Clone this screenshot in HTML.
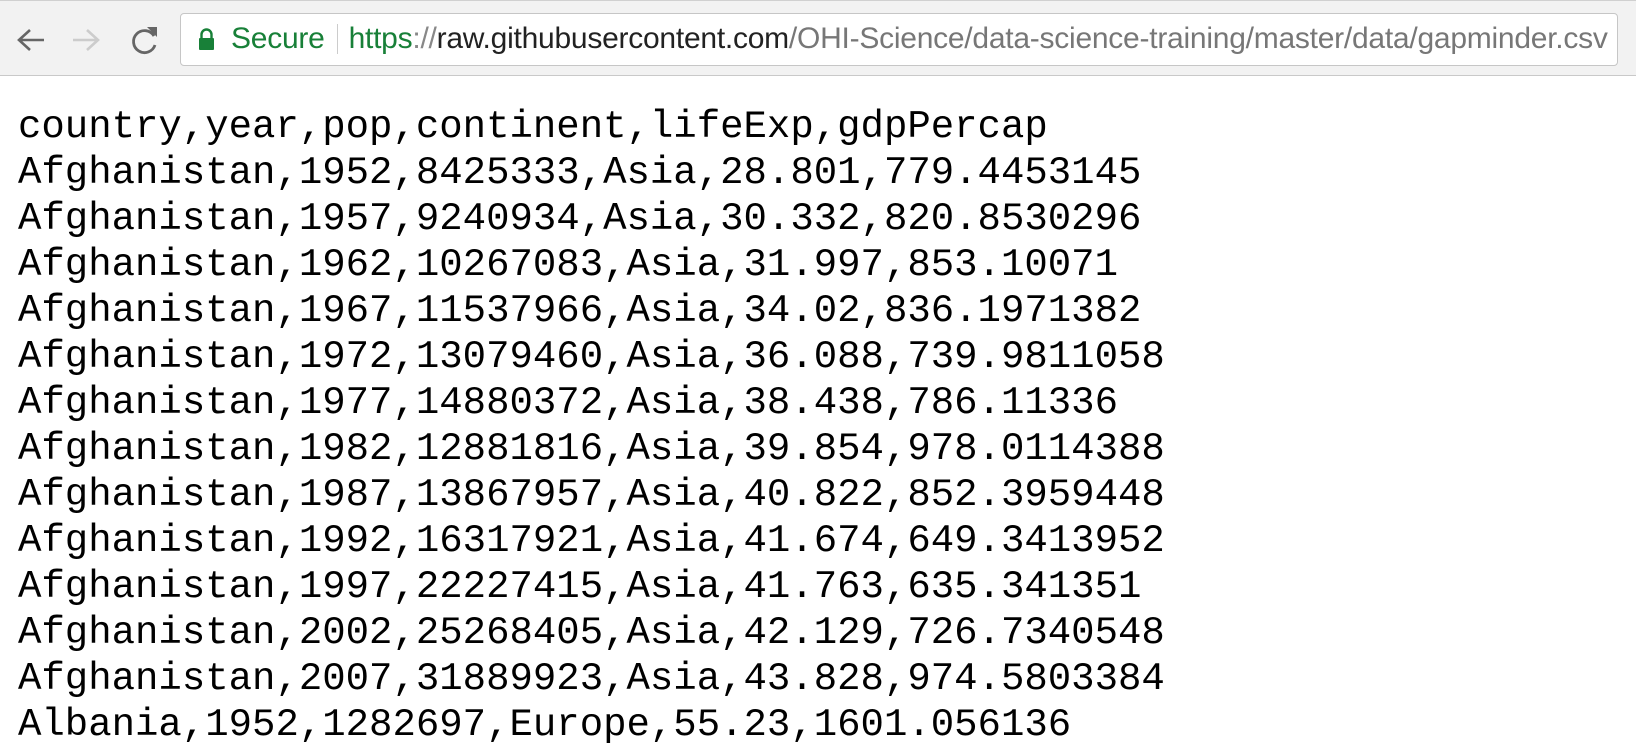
<!DOCTYPE html>
<html><head><style>
body{margin:0;width:1636px;height:746px;overflow:hidden;background:#fff;font-family:"Liberation Sans",sans-serif}
.bar{position:absolute;left:0;top:0;width:1636px;height:76px;background:#f2f2f2;border-bottom:1px solid #c9c9c9;border-top:1px solid #d0d0d0;box-sizing:border-box}
.box{position:absolute;left:180px;top:12px;width:1438px;height:53px;background:#fff;border:1px solid #c6c6c6;border-radius:4px;box-sizing:border-box}
.url{position:absolute;left:231px;top:21px;font-size:30px;color:#222;white-space:nowrap;letter-spacing:-0.25px}
pre{position:absolute;left:18px;top:104px;margin:0;font-family:"Liberation Mono",monospace;font-size:39px;line-height:46px;color:#000}
</style></head><body>
<div class="bar">
<svg style="position:absolute;left:0;top:22px" width="170" height="34">
<path d="M44 17H20M30 7L19 17l11 10" stroke="#666" stroke-width="2.6" fill="none"/>
<path d="M73 17h24M87 7l11 10-11 10" stroke="#ccc" stroke-width="2.6" fill="none"/>
<path d="M154 13a11 11 0 1 0 1 9" stroke="#666" stroke-width="2.8" fill="none"/>
<path d="M147 4l10 0 0 10z" fill="#666"/>
</svg>
<div class="box"></div>
<svg style="position:absolute;left:198px;top:27px" width="17" height="23"><path d="M3.5 10V6.5a5 5 0 0 1 10 0V10" stroke="#188038" stroke-width="2.4" fill="none"/><rect x="1" y="10" width="15" height="12" rx="1" fill="#188038"/></svg>
<div class="url"><span style="color:#188038">Secure</span><span style="display:inline-block;width:1px;height:30px;background:#ccc;margin:0 11px 0 12px;vertical-align:-6px"></span><span style="color:#188038">https</span><span style="color:#888">://</span>raw.githubusercontent.com<span style="color:#777">/OHI-Science/data-science-training/master/data/gapminder.csv</span></div>
</div>
<pre>country,year,pop,continent,lifeExp,gdpPercap
Afghanistan,1952,8425333,Asia,28.801,779.4453145
Afghanistan,1957,9240934,Asia,30.332,820.8530296
Afghanistan,1962,10267083,Asia,31.997,853.10071
Afghanistan,1967,11537966,Asia,34.02,836.1971382
Afghanistan,1972,13079460,Asia,36.088,739.9811058
Afghanistan,1977,14880372,Asia,38.438,786.11336
Afghanistan,1982,12881816,Asia,39.854,978.0114388
Afghanistan,1987,13867957,Asia,40.822,852.3959448
Afghanistan,1992,16317921,Asia,41.674,649.3413952
Afghanistan,1997,22227415,Asia,41.763,635.341351
Afghanistan,2002,25268405,Asia,42.129,726.7340548
Afghanistan,2007,31889923,Asia,43.828,974.5803384
Albania,1952,1282697,Europe,55.23,1601.056136</pre>
</body></html>
